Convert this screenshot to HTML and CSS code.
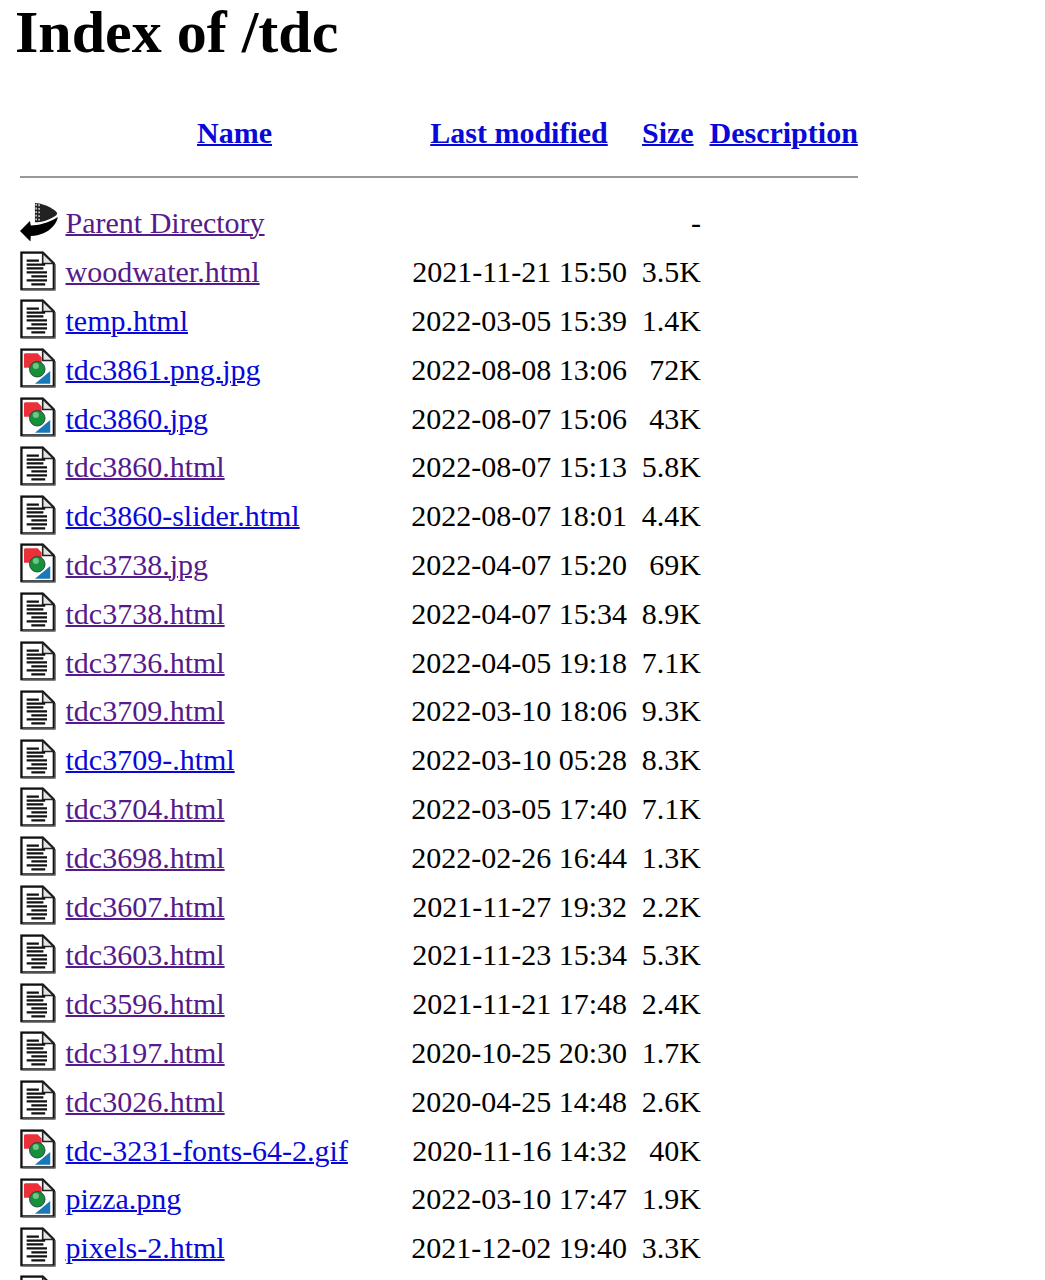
FILE: index.html
```html
<!DOCTYPE html>
<html lang="en">
<head>
    <meta charset="UTF-8">
    <title>Index of /tdc</title>
    <link rel="stylesheet" href="styles.css">
</head>
<body>

    <!-- Icon shapes, reused by every row -->
    <svg class="icon-defs" width="0" height="0">
        <defs>
            <symbol id="ico-page" viewBox="0 0 20 22">
                <path d="M.8 .7H12.6L18.8 6.8V21.2H.8Z" fill="#fff" stroke="#111" stroke-width="1.3"/>
                <path d="M1.4 21.6H19.5V7.2" fill="none" stroke="#666" stroke-width=".8"/>
                <path d="M12.6 1V6.8H18.6Z" fill="#e4e4e4" stroke="#222" stroke-width=".9"/>
            </symbol>
            <symbol id="ico-text" viewBox="0 0 20 22">
                <use href="#ico-page"/>
                <path d="M3.7 5.2H10.5M3.7 7.4H14M3.7 9.6H13M3.7 11.8H15M6.3 14H15M3.7 16.2H15M6.3 18.4H14" stroke="#111" stroke-width="1.25"/>
            </symbol>
            <symbol id="ico-image" viewBox="0 0 20 22">
                <use href="#ico-page"/>
                <path d="M2.8 2.8H9.8L12 5.2V9.5H9.5V10.8H2.2V3.4Z" fill="#ec3038"/>
                <path d="M16.8 12.6V19.7H8.3Z" fill="#1878b8"/>
                <circle cx="9.6" cy="11.7" r="4.3" fill="#16903a" stroke="#24403a" stroke-width=".5"/>
                <circle cx="8.8" cy="9.9" r="1.7" fill="#6fc486"/>
            </symbol>
            <symbol id="ico-back" viewBox="0 0 20 22" overflow="visible">
                <path d="M0 16L5.5 10.5L6 12.9C10 12.9 15.5 11.7 21 8.2C20.5 12 17 15.5 13 17.3C11 18.2 8.5 18.7 6 18.8L5.8 21.8Z" fill="#000"/>
                <path d="M8.3 .4C12 .6 18 2.5 20.7 6L20.2 7.2C16 10 12 11.2 8.3 11.2Z" fill="#222"/>
                <path d="M9 1V10.8M10.6 1.2V10.6" stroke="#c8c8c8" stroke-width=".9" stroke-dasharray="1 1"/>
            </symbol>
        </defs>
    </svg>

    <h1 class="main-heading">Index of /tdc</h1>

    <table class="listing">
        <tr class="head-row">
            <th class="col-icon"></th>
            <th class="col-name"><a href="#">Name</a></th>
            <th class="col-date"><a href="#">Last modified</a></th>
            <th class="col-size"><a href="#">Size</a></th>
            <th class="col-desc"><a href="#">Description</a></th>
        </tr>
        <tr class="rule-row"><th colspan="5"><hr></th></tr>

        <tr><td class="col-icon"><svg class="ico"><use href="#ico-back"/></svg></td><td><a class="seen" href="#">Parent Directory</a></td><td></td><td class="col-right">-</td><td></td></tr>
        <tr><td class="col-icon"><svg class="ico"><use href="#ico-text"/></svg></td><td><a class="seen" href="#">woodwater.html</a></td><td class="col-right">2021-11-21 15:50</td><td class="col-right">3.5K</td><td></td></tr>
        <tr><td class="col-icon"><svg class="ico"><use href="#ico-text"/></svg></td><td><a href="#">temp.html</a></td><td class="col-right">2022-03-05 15:39</td><td class="col-right">1.4K</td><td></td></tr>
        <tr><td class="col-icon"><svg class="ico"><use href="#ico-image"/></svg></td><td><a href="#">tdc3861.png.jpg</a></td><td class="col-right">2022-08-08 13:06</td><td class="col-right">72K</td><td></td></tr>
        <tr><td class="col-icon"><svg class="ico"><use href="#ico-image"/></svg></td><td><a href="#">tdc3860.jpg</a></td><td class="col-right">2022-08-07 15:06</td><td class="col-right">43K</td><td></td></tr>
        <tr><td class="col-icon"><svg class="ico"><use href="#ico-text"/></svg></td><td><a class="seen" href="#">tdc3860.html</a></td><td class="col-right">2022-08-07 15:13</td><td class="col-right">5.8K</td><td></td></tr>
        <tr><td class="col-icon"><svg class="ico"><use href="#ico-text"/></svg></td><td><a href="#">tdc3860-slider.html</a></td><td class="col-right">2022-08-07 18:01</td><td class="col-right">4.4K</td><td></td></tr>
        <tr><td class="col-icon"><svg class="ico"><use href="#ico-image"/></svg></td><td><a class="seen" href="#">tdc3738.jpg</a></td><td class="col-right">2022-04-07 15:20</td><td class="col-right">69K</td><td></td></tr>
        <tr><td class="col-icon"><svg class="ico"><use href="#ico-text"/></svg></td><td><a class="seen" href="#">tdc3738.html</a></td><td class="col-right">2022-04-07 15:34</td><td class="col-right">8.9K</td><td></td></tr>
        <tr><td class="col-icon"><svg class="ico"><use href="#ico-text"/></svg></td><td><a class="seen" href="#">tdc3736.html</a></td><td class="col-right">2022-04-05 19:18</td><td class="col-right">7.1K</td><td></td></tr>
        <tr><td class="col-icon"><svg class="ico"><use href="#ico-text"/></svg></td><td><a class="seen" href="#">tdc3709.html</a></td><td class="col-right">2022-03-10 18:06</td><td class="col-right">9.3K</td><td></td></tr>
        <tr><td class="col-icon"><svg class="ico"><use href="#ico-text"/></svg></td><td><a href="#">tdc3709-.html</a></td><td class="col-right">2022-03-10 05:28</td><td class="col-right">8.3K</td><td></td></tr>
        <tr><td class="col-icon"><svg class="ico"><use href="#ico-text"/></svg></td><td><a class="seen" href="#">tdc3704.html</a></td><td class="col-right">2022-03-05 17:40</td><td class="col-right">7.1K</td><td></td></tr>
        <tr><td class="col-icon"><svg class="ico"><use href="#ico-text"/></svg></td><td><a class="seen" href="#">tdc3698.html</a></td><td class="col-right">2022-02-26 16:44</td><td class="col-right">1.3K</td><td></td></tr>
        <tr><td class="col-icon"><svg class="ico"><use href="#ico-text"/></svg></td><td><a class="seen" href="#">tdc3607.html</a></td><td class="col-right">2021-11-27 19:32</td><td class="col-right">2.2K</td><td></td></tr>
        <tr><td class="col-icon"><svg class="ico"><use href="#ico-text"/></svg></td><td><a class="seen" href="#">tdc3603.html</a></td><td class="col-right">2021-11-23 15:34</td><td class="col-right">5.3K</td><td></td></tr>
        <tr><td class="col-icon"><svg class="ico"><use href="#ico-text"/></svg></td><td><a class="seen" href="#">tdc3596.html</a></td><td class="col-right">2021-11-21 17:48</td><td class="col-right">2.4K</td><td></td></tr>
        <tr><td class="col-icon"><svg class="ico"><use href="#ico-text"/></svg></td><td><a class="seen" href="#">tdc3197.html</a></td><td class="col-right">2020-10-25 20:30</td><td class="col-right">1.7K</td><td></td></tr>
        <tr><td class="col-icon"><svg class="ico"><use href="#ico-text"/></svg></td><td><a class="seen" href="#">tdc3026.html</a></td><td class="col-right">2020-04-25 14:48</td><td class="col-right">2.6K</td><td></td></tr>
        <tr><td class="col-icon"><svg class="ico"><use href="#ico-image"/></svg></td><td><a href="#">tdc-3231-fonts-64-2.gif</a></td><td class="col-right">2020-11-16 14:32</td><td class="col-right">40K</td><td></td></tr>
        <tr><td class="col-icon"><svg class="ico"><use href="#ico-image"/></svg></td><td><a href="#">pizza.png</a></td><td class="col-right">2022-03-10 17:47</td><td class="col-right">1.9K</td><td></td></tr>
        <tr><td class="col-icon"><svg class="ico"><use href="#ico-text"/></svg></td><td><a href="#">pixels-2.html</a></td><td class="col-right">2021-12-02 19:40</td><td class="col-right">3.3K</td><td></td></tr>
        <tr><td class="col-icon"><svg class="ico"><use href="#ico-text"/></svg></td><td></td><td></td><td></td><td></td></tr>
    </table>

</body>
</html>
```

FILE: styles.css
```css
/* Basic styling for the page */
html {
    height: 1280px;
    overflow: hidden;
}

body {
    margin: 0;
    padding: 0 15px;
    height: 1280px;
    overflow: hidden;
    background-color: #fff;
    color: #000;
    font-family: "Liberation Serif", "Times New Roman", serif;
    font-size: 30px;
}

a {
    color: #0808d8;
    text-decoration-thickness: 1.5px;
}

a.seen {
    color: #551a8b;
}

.icon-defs {
    position: absolute;
}

/* Page title */
.main-heading {
    margin: 0;
    font-size: 60px;
    line-height: 64px;
    font-weight: bold;
}

/* Directory listing table */
.listing {
    margin-top: 47px;
    border-collapse: separate;
    border-spacing: 0;
}

.listing td,
.listing th {
    padding: 0;
    white-space: nowrap;
}

.listing tr {
    height: 48.8px;
}

.listing .head-row {
    height: 44px;
}

.listing .rule-row {
    height: 44px;
}

.listing hr {
    margin: 0 0 0 5px;
    border: none;
    border-top: 2px solid #999;
}

.col-icon {
    width: 45.5px;
    padding-left: 5px !important;
    text-align: left;
}

.col-name {
    width: 338px;
}

.col-date {
    width: 216px;
    padding-left: 7.5px !important;
}

.col-size {
    width: 59px;
    padding-left: 15px !important;
    text-align: left;
}

.col-desc {
    padding-left: 8.5px !important;
}

.col-right {
    text-align: right;
}

.ico {
    display: block;
    width: 36px;
    height: 40px;
    margin-bottom: 3px;
    overflow: visible;
    filter: blur(.4px);
}
```
